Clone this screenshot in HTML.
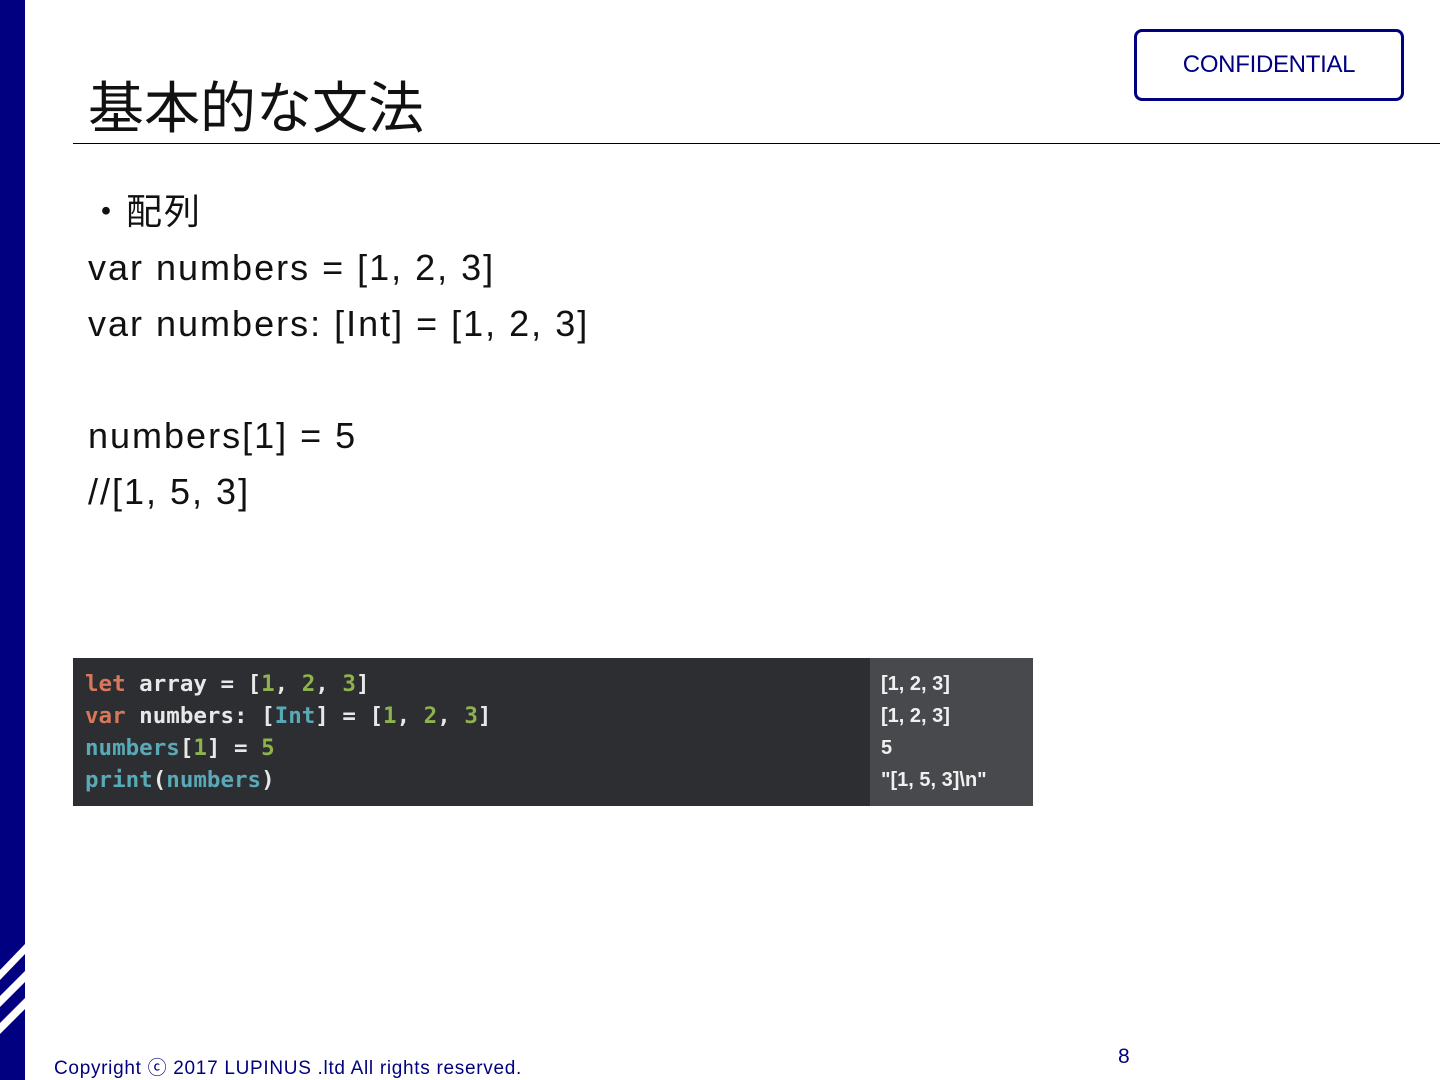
<!DOCTYPE html>
<html><head><meta charset="utf-8"><style>
body{margin:0;width:1440px;height:1080px;background:#fff;position:relative;overflow:hidden;font-family:"Liberation Sans","Noto Sans CJK JP",sans-serif}
.bar{position:absolute;left:0;top:0;width:25px;height:1080px;background:#000080}
h1{position:absolute;left:88px;top:72px;margin:0;font-weight:normal;font-size:56px;line-height:66px;color:#111;font-family:"Noto Sans CJK JP",sans-serif}
.rule{position:absolute;left:73px;top:143px;width:1367px;height:1px;background:#000}
.conf{position:absolute;left:1134px;top:29px;width:264px;height:66px;border:3px solid #000080;border-radius:8px;color:#000080;font-size:24px;line-height:66px;text-align:center;box-sizing:content-box;letter-spacing:-0.3px}
.body{position:absolute;left:88px;top:184px;font-size:36px;line-height:56px;color:#111;letter-spacing:2px}
.code{position:absolute;left:73px;top:658px;width:960px;height:148px;background:#2c2e32;font-family:"DejaVu Sans Mono",monospace;font-weight:bold;font-size:22.5px}
.code .l{position:absolute;left:12px;line-height:32px;color:#e8e8e8}
.rp{position:absolute;left:797px;top:0;width:163px;height:148px;background:#47494c;color:#f0f0f0;font-family:"Liberation Sans",sans-serif;font-size:20px}
.k{color:#d9775a}.n{color:#8db24e}.t{color:#59a9b6}
.foot{position:absolute;left:54px;top:1053px;font-size:19px;color:#000080;letter-spacing:0.7px}
.pg{position:absolute;left:1118px;top:1045px;font-size:21px;color:#000080}
</style></head><body>
<div class="bar"></div>
<svg style="position:absolute;left:0;top:940px" width="25" height="100"><g fill="#fff"><polygon points="25,4 25,14 0,40 0,30"/><polygon points="25,31 25,42 0,67 0,56"/><polygon points="25,58 25,69 0,94 0,83"/></g></svg>
<h1>基本的な文法</h1>
<div class="rule"></div>
<div class="conf">CONFIDENTIAL</div>
<div class="body">・配列<br>var numbers = [1, 2, 3]<br>var numbers: [Int] = [1, 2, 3]<br><br>numbers[1] = 5<br>//[1, 5, 3]</div>
<div class="code">
<div class="l" style="top:10px"><span class="k">let</span> array = [<span class="n">1</span>, <span class="n">2</span>, <span class="n">3</span>]</div>
<div class="l" style="top:42px"><span class="k">var</span> numbers: [<span class="t">Int</span>] = [<span class="n">1</span>, <span class="n">2</span>, <span class="n">3</span>]</div>
<div class="l" style="top:74px"><span class="t">numbers</span>[<span class="n">1</span>] = <span class="n">5</span></div>
<div class="l" style="top:106px"><span class="t">print</span>(<span class="t">numbers</span>)</div>
<div class="rp"><div style="position:absolute;left:11px;top:10px;line-height:32px;font-weight:bold">[1, 2, 3]<br>[1, 2, 3]<br>5<br>"[1, 5, 3]\n"</div></div>
</div>
<div class="foot">Copyright ⓒ 2017 LUPINUS .ltd All rights reserved.</div>
<div class="pg">8</div>
</body></html>
